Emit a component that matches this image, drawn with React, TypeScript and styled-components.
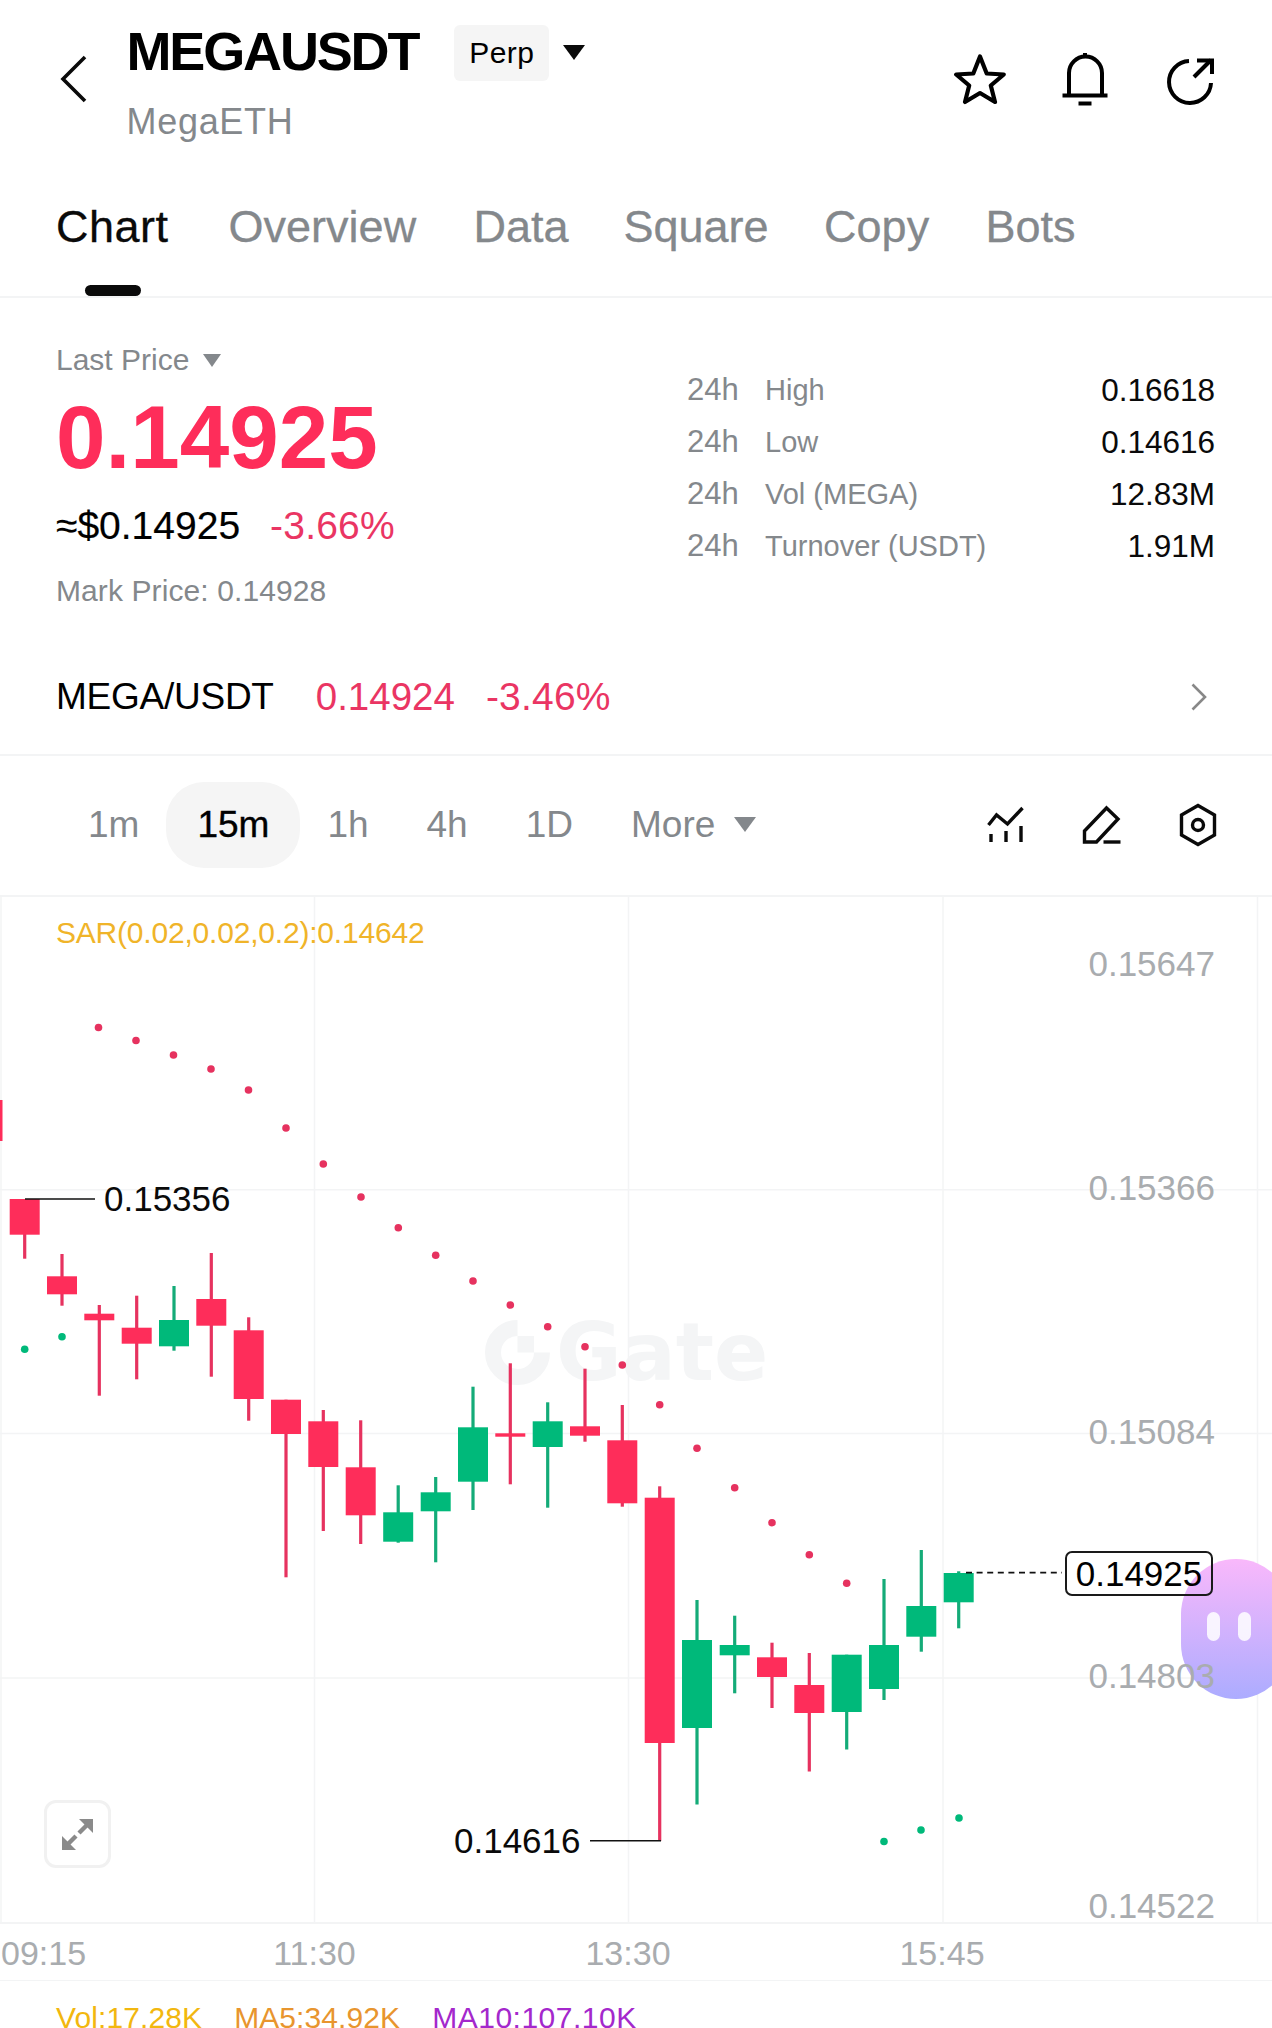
import React from "react";
import styled, { createGlobalStyle } from "styled-components";

const Global = createGlobalStyle`
  html, body { margin: 0; padding: 0; background: #fff; }
  * { box-sizing: border-box; }
  body { font-family: "Liberation Sans", Arial, sans-serif; color: #000; }
`;

const RED = "#fe2d5a";
const RED_WICK = "#e6325f";
const RED_TEXT = "#ea3563";
const GREEN = "#00b97a";
const GREEN_WICK = "#14ab78";
const GRAY = "#84888c";
const LINE = "#f3f4f5";

const Page = styled.div`
  width: 1272px;
  height: 2028px;
  overflow: hidden;
  background: #fff;
`;

/* ---------- header ---------- */
const Header = styled.header`
  display: flex;
  height: 150px;
  padding: 0 56px 0 60px;
`;
const BackIcon = styled.svg`
  width: 28px;
  height: 48px;
  margin: 55px 38.5px 0 0;
  flex: none;
`;
const TitleBlock = styled.div`
  display: flex;
  flex-direction: column;
  padding-top: 25px;
`;
const TitleRow = styled.div`
  display: flex;
  align-items: center;
  height: 56px;
`;
const Title = styled.h1`
  margin: 0 36px 5px 0;
  font-size: 54px;
  line-height: 56px;
  font-weight: 700;
  letter-spacing: -2.15px;
  white-space: nowrap;
`;
const Badge = styled.span`
  display: flex;
  align-items: center;
  justify-content: center;
  width: 95px;
  height: 56px;
  border-radius: 6px;
  background: #f5f5f5;
  font-size: 30px;
  letter-spacing: 0.4px;
  margin-right: 14px;
`;
const Caret = styled.i<{ $w: number; $h: number; $c: string }>`
  display: block;
  flex: none;
  width: 0;
  height: 0;
  border-left: ${(p) => p.$w / 2}px solid transparent;
  border-right: ${(p) => p.$w / 2}px solid transparent;
  border-top: ${(p) => p.$h}px solid ${(p) => p.$c};
`;
const BadgeCaret = styled(Caret)`
  margin-bottom: 2px;
`;
const Subtitle = styled.div`
  margin-top: 19px;
  font-size: 36px;
  line-height: 44px;
  color: ${GRAY};
  letter-spacing: 0.7px;
`;
const HeaderIcons = styled.div`
  margin-left: auto;
  margin-top: 53px;
  display: flex;
  gap: 53px;
  align-items: flex-start;
`;
const HeaderIcon = styled.svg`
  width: 52px;
  height: 53px;
  display: block;
`;

/* ---------- tabs ---------- */
const Tabs = styled.nav`
  display: flex;
  height: 148px;
  padding-left: 56px;
  border-bottom: 2px solid ${LINE};
`;
const Tab = styled.div<{ $w: number; $active?: boolean }>`
  position: relative;
  width: ${(p) => p.$w}px;
  padding-top: 47px;
  font-size: 45px;
  line-height: 60px;
  color: ${(p) => (p.$active ? "#0a0a0a" : GRAY)};
  letter-spacing: ${(p) => (p.$active ? 0.5 : 0)}px;
  -webkit-text-stroke: 0.3px currentColor;
  ${(p) =>
    p.$active &&
    `&::after {
      content: "";
      position: absolute;
      left: 29px;
      bottom: 0;
      width: 56px;
      height: 11px;
      border-radius: 6px;
      background: #0a0a0a;
    }`}
`;

/* ---------- price section ---------- */
const PriceSection = styled.section`
  border-bottom: 2px solid ${LINE};
  padding: 44px 57px 35px 56px;
`;
const PriceTop = styled.div`
  display: flex;
  justify-content: space-between;
`;
const PriceCol = styled.div`
  display: flex;
  flex-direction: column;
`;
const LastLabel = styled.div`
  display: flex;
  align-items: center;
  gap: 14px;
  font-size: 30px;
  line-height: 36px;
  color: ${GRAY};
`;
const BigPrice = styled.div`
  margin-top: 15px;
  font-size: 89px;
  line-height: 88px;
  font-weight: 700;
  color: ${RED};
`;
const UsdRow = styled.div`
  margin-top: 23px;
  display: flex;
  gap: 30px;
  font-size: 39px;
  line-height: 44px;
`;
const UsdText = styled.span`
  -webkit-text-stroke: 0.2px currentColor;
`;
const ChangeText = styled.span`
  color: ${RED_TEXT};
  font-size: 39px;
  letter-spacing: 0.2px;
`;
const MarkText = styled.div`
  margin-top: 25px;
  font-size: 30px;
  line-height: 36px;
  letter-spacing: 0.1px;
  color: ${GRAY};
`;
const StatsCol = styled.div`
  width: 528px;
  margin-top: 22px;
`;
const StatRow = styled.div`
  display: flex;
  font-size: 29px;
  line-height: 52px;
  color: ${GRAY};
`;
const StatPrefix = styled.span`
  width: 78px;
  font-size: 31px;
`;
const StatValue = styled.span`
  margin-left: auto;
  font-size: 31.5px;
  color: #0a0a0a;
`;
const SpotRow = styled.div`
  display: flex;
  align-items: center;
  margin-top: 66px;
  height: 44px;
  font-size: 38.5px;
  line-height: 44px;
`;
const SpotName = styled.span`
  font-size: 37px;
  letter-spacing: -0.25px;
  margin-right: 42px;
`;
const SpotPrice = styled.span`
  color: ${RED_TEXT};
  margin-right: 31px;
`;
const SpotChevron = styled.svg`
  width: 16px;
  height: 28px;
  margin-left: auto;
  margin-right: 8px;
`;

/* ---------- interval bar ---------- */
const IntervalBar = styled.div`
  display: flex;
  align-items: center;
  height: 141px;
  padding: 0 55.5px 2px 59px;
  border-bottom: 2px solid ${LINE};
`;
const Interval = styled.div<{ $active?: boolean }>`
  display: flex;
  align-items: center;
  justify-content: center;
  height: 86px;
  font-size: 37px;
  padding: 0 ${(p) => (p.$active ? 31 : 29)}px;
  margin: 0 ${(p) => (p.$active ? -2 : 0)}px;
  border-radius: 38px;
  color: ${(p) => (p.$active ? "#000" : GRAY)};
  background: ${(p) => (p.$active ? "#f5f5f5" : "transparent")};
  ${(p) => p.$active && "-webkit-text-stroke: 0.4px #000;"}
`;
const MoreCaret = styled(Caret)`
  margin-left: 19px;
`;
const ToolIcons = styled.div`
  margin-left: auto;
  display: flex;
  gap: 60px;
  align-items: center;
`;
const ToolIcon = styled.svg`
  width: 38px;
  height: 42px;
  display: block;
  overflow: visible;
`;

/* ---------- chart ---------- */
const Chart = styled.div`
  position: relative;
  height: 1025px;
`;
const ChartSvg = styled.svg`
  position: absolute;
  inset: 0;
  width: 1272px;
  height: 1025px;
`;
const Watermark = styled.div`
  position: absolute;
  left: 485px;
  top: 423px;
  display: flex;
  align-items: center;
  gap: 6px;
  height: 65px;
  font-family: "DejaVu Sans", "Liberation Sans", sans-serif;
  font-weight: 700;
  font-size: 80px;
  color: #f4f5f6;
`;
const WatermarkLogo = styled.svg`
  width: 65px;
  height: 65px;
  flex: none;
`;
const Legend = styled.div`
  position: absolute;
  left: 56px;
  top: 18px;
  font-size: 30px;
  line-height: 36px;
  letter-spacing: -0.2px;
  color: #f0b429;
`;
const PriceTick = styled.div<{ $base: number }>`
  position: absolute;
  right: 57px;
  top: ${(p) => p.$base - 897 - 32}px;
  font-size: 35px;
  line-height: 40px;
  color: #a9acaf;
`;
const ExtremeLabel = styled.div<{ $x: number; $base: number }>`
  position: absolute;
  left: ${(p) => p.$x}px;
  top: ${(p) => p.$base - 897 - 32}px;
  font-size: 35px;
  line-height: 40px;
  color: #0a0a0a;
`;
const LastTag = styled.div`
  position: absolute;
  left: 1065px;
  top: 654px;
  width: 148px;
  height: 45px;
  display: flex;
  align-items: center;
  justify-content: center;
  border: 2px solid #1a1a1a;
  border-radius: 7px;
  font-size: 35px;
  line-height: 40px;
`;
const Mascot = styled.div`
  position: absolute;
  left: 1181px;
  top: 662px;
  width: 110px;
  height: 140px;
  border-radius: 70px;
  background: linear-gradient(180deg, #f9b8fb 0%, #acacff 100%);
  display: flex;
  gap: 18px;
  padding: 53px 0 0 26px;
`;
const MascotEye = styled.span`
  display: block;
  width: 13px;
  height: 29px;
  border-radius: 7px;
  background: rgba(255, 255, 255, 0.85);
`;
const ExpandButton = styled.div`
  position: absolute;
  left: 44px;
  top: 903px;
  width: 67px;
  height: 68px;
  display: flex;
  align-items: center;
  justify-content: center;
  border: 3px solid #f1f1f1;
  border-radius: 12px;
  background: #fff;
`;
const ExpandIcon = styled.svg`
  width: 31px;
  height: 31px;
`;

/* ---------- time axis + legend ---------- */
const TimeAxis = styled.div`
  position: relative;
  height: 59px;
  border-top: 2px solid ${LINE};
  border-bottom: 1px solid ${LINE};
`;
const TimeLabel = styled.span<{ $x: number; $start?: boolean }>`
  position: absolute;
  left: ${(p) => p.$x}px;
  top: 9px;
  transform: ${(p) => (p.$start ? "none" : "translateX(-50%)")};
  font-size: 34px;
  line-height: 40px;
  color: #a9acaf;
`;
const VolumeLegend = styled.div`
  display: flex;
  gap: 32px;
  padding: 19px 0 0 56px;
  font-size: 30px;
  line-height: 36px;
  letter-spacing: 0.1px;
`;
const VolumeItem = styled.span<{ $c: string; $wide?: boolean }>`
  color: ${(p) => p.$c};
  ${(p) => p.$wide && "letter-spacing: 0.5px;"}
`;

/* ---------- data ---------- */
type Candle = [number, number, number, number, number, boolean];
// x, wickTop, wickBottom, bodyTop, bodyBottom, isUp
const candles: Candle[] = [
  [24.7, 1199, 1258.7, 1199, 1234.7, false],
  [62, 1254, 1305.7, 1276.3, 1294.3, false],
  [99.3, 1305, 1395.7, 1313.7, 1320.3, false],
  [136.7, 1295.7, 1379.3, 1327.7, 1343.7, false],
  [174, 1286, 1350.7, 1320, 1346.3, true],
  [211.3, 1253, 1376.7, 1299, 1325.7, false],
  [248.7, 1317.3, 1420.7, 1330.3, 1399, false],
  [286, 1399.7, 1577.3, 1399.7, 1434, false],
  [323.3, 1410, 1531, 1421.3, 1467, false],
  [360.7, 1420.3, 1544, 1467.3, 1515.3, false],
  [398.2, 1485.3, 1542.7, 1512.3, 1541.7, true],
  [435.7, 1477, 1562.3, 1492.3, 1511.3, true],
  [473, 1386.7, 1510, 1427.3, 1481.7, true],
  [510.3, 1363.3, 1484.3, 1433.3, 1436.7, false],
  [547.7, 1402.3, 1507.7, 1421.3, 1447, true],
  [585, 1368.7, 1441.7, 1426.3, 1435.7, false],
  [622.3, 1405, 1506.7, 1440.3, 1503.3, false],
  [659.7, 1486.3, 1841, 1497.7, 1743, false],
  [697, 1600, 1804.5, 1640, 1728, true],
  [734.7, 1615.7, 1693.3, 1645, 1655.3, true],
  [772, 1642.7, 1708, 1657.3, 1677, false],
  [809.3, 1653, 1771.5, 1685, 1713, false],
  [846.7, 1654.7, 1749.5, 1654.7, 1712, true],
  [884, 1579, 1700, 1645, 1689, true],
  [921.3, 1550, 1651.7, 1606, 1636.7, true],
  [958.7, 1571.3, 1628.3, 1573, 1602.3, true],
];
const redDots: [number, number][] = [
  [98.5, 1027.5], [136, 1040.5], [173.5, 1055], [211, 1069], [248.5, 1090],
  [286, 1128], [323.3, 1164], [361, 1197], [398.3, 1227.7], [435.7, 1255.3],
  [473, 1281], [510.3, 1305], [547.7, 1326.7], [585, 1346.7], [622.3, 1365],
  [659.7, 1404.7], [697, 1448.3], [734.7, 1487.7], [772, 1522.7], [809.3, 1554.7],
  [846.7, 1583.3],
];
const greenDots: [number, number][] = [
  [24.7, 1349.3], [62, 1336.7], [884, 1841.5], [921, 1830], [959, 1818],
];
const stats = [
  ["High", "0.16618"],
  ["Low", "0.14616"],
  ["Vol (MEGA)", "12.83M"],
  ["Turnover (USDT)", "1.91M"],
];
const tabs: [string, number][] = [
  ["Chart", 172.6],
  ["Overview", 244.9],
  ["Data", 150],
  ["Square", 200.6],
  ["Copy", 161.3],
  ["Bots", 100],
];
const intervals = ["1m", "15m", "1h", "4h", "1D"];
const ticks: [string, number][] = [
  ["0.15647", 976],
  ["0.15366", 1200],
  ["0.15084", 1444],
  ["0.14803", 1688],
  ["0.14522", 1918],
];

export default function App() {
  return (
    <Page>
      <Global />
      <Header>
        <BackIcon viewBox="0 0 28 48" fill="none" stroke="#0a0a0a" strokeWidth="3.6">
          <path d="M25 2 L3 24 L25 46" />
        </BackIcon>
        <TitleBlock>
          <TitleRow>
            <Title>MEGAUSDT</Title>
            <Badge>Perp</Badge>
            <BadgeCaret $w={22} $h={15} $c="#0a0a0a" />
          </TitleRow>
          <Subtitle>MegaETH</Subtitle>
        </TitleBlock>
        <HeaderIcons>
          <HeaderIcon viewBox="0 0 52 53" fill="none" stroke="#000" strokeWidth="4.2" strokeLinejoin="round">
            <path d="M26 3.5 L32.7 20.5 L49.8 21.5 L36.8 32.5 L41 49 L26 40 L11 49 L15.2 32.5 L2.2 21.5 L19.3 20.5 Z" />
          </HeaderIcon>
          <HeaderIcon viewBox="0 0 52 53" fill="none" stroke="#000" strokeWidth="4">
            <path d="M10 42 V20 A16.5 16.5 0 0 1 43 20 V42" />
            <path d="M3.5 42.5 H48.5" />
            <path d="M26 0 V5" />
            <path d="M19.5 50.5 H32.5" />
          </HeaderIcon>
          <HeaderIcon viewBox="0 0 52 53" fill="none" stroke="#000" strokeWidth="4">
            <path d="M25 8 A21 21 0 1 0 47 30" />
            <path d="M30 24 L47 7" />
            <path d="M33 7.5 H48 V21" />
          </HeaderIcon>
        </HeaderIcons>
      </Header>

      <Tabs>
        {tabs.map(([t, w], i) => (
          <Tab key={t} $w={w} $active={i === 0}>
            {t}
          </Tab>
        ))}
      </Tabs>

      <PriceSection>
        <PriceTop>
          <PriceCol>
            <LastLabel>
              Last Price
              <Caret $w={19} $h={13} $c={GRAY} />
            </LastLabel>
            <BigPrice>0.14925</BigPrice>
            <UsdRow>
              <UsdText>≈$0.14925</UsdText>
              <ChangeText>-3.66%</ChangeText>
            </UsdRow>
            <MarkText>Mark Price: 0.14928</MarkText>
          </PriceCol>
          <StatsCol>
            {stats.map(([label, value]) => (
              <StatRow key={label}>
                <StatPrefix>24h</StatPrefix>
                <span>{label}</span>
                <StatValue>{value}</StatValue>
              </StatRow>
            ))}
          </StatsCol>
        </PriceTop>
        <SpotRow>
          <SpotName>MEGA/USDT</SpotName>
          <SpotPrice>0.14924</SpotPrice>
          <ChangeText>-3.46%</ChangeText>
          <SpotChevron viewBox="0 0 16 28" fill="none" stroke="#888" strokeWidth="2.6">
            <path d="M1.5 1.5 L14 14 L1.5 26.5" />
          </SpotChevron>
        </SpotRow>
      </PriceSection>

      <IntervalBar>
        {intervals.map((t) => (
          <Interval key={t} $active={t === "15m"}>
            {t}
          </Interval>
        ))}
        <Interval>
          More
          <MoreCaret $w={22} $h={15} $c={GRAY} />
        </Interval>
        <ToolIcons>
          <ToolIcon viewBox="-3.5 0 38 42" fill="none" stroke="#0a0a0a" strokeWidth="3.4">
            <path d="M2 21 L10 11 L21 20 L36 4" />
            <path d="M4.5 30 V38 M19.5 27 V38 M34.5 22 V38" />
          </ToolIcon>
          <ToolIcon viewBox="-1.5 0 38 42" fill="none" stroke="#0a0a0a" strokeWidth="3.4">
            <path d="M2 38 V27 L24 4 L35.5 15 L14 38 Z" />
            <path d="M21 38 H38" />
          </ToolIcon>
          <ToolIcon viewBox="0 0 38 42" fill="none" stroke="#0a0a0a" strokeWidth="3.4">
            <path d="M19 1.5 L35.5 11 V31 L19 40.5 L2.5 31 V11 Z" />
            <circle cx="19" cy="21" r="5.5" />
          </ToolIcon>
        </ToolIcons>
      </IntervalBar>

      <Chart>
        <Watermark>
          <WatermarkLogo viewBox="0 0 65 65" fill="none" stroke="#f4f5f6" strokeWidth="16">
            <path d="M32.5 8 A24.5 24.5 0 1 0 57 32.5" />
            <rect x="32.5" y="16" width="16.5" height="16.5" fill="#f4f5f6" stroke="none" />
          </WatermarkLogo>
          Gate
        </Watermark>
        <ChartSvg viewBox="0 897 1272 1025">
          {[1189.7, 1433.5, 1678].map((y) => (
            <line key={y} x1="0" x2="1272" y1={y} y2={y} stroke={LINE} strokeWidth="1.5" />
          ))}
          {[1, 314.5, 628.5, 943, 1257.5].map((x) => (
            <line key={x} x1={x} x2={x} y1="897" y2="1922" stroke={LINE} strokeWidth="1.5" />
          ))}
          <rect x="0" y="1100" width="2.5" height="41" fill={RED} />
          {candles.map(([x, wt, wb, bt, bb, up]) => (
            <g key={x}>
              <rect x={x - 1.6} y={wt} width="3.2" height={wb - wt} fill={up ? GREEN_WICK : RED_WICK} />
              <rect x={x - 15} y={bt} width="30" height={bb - bt} fill={up ? GREEN : RED} />
            </g>
          ))}
          {redDots.map(([x, y]) => (
            <circle key={x} cx={x} cy={y} r="3.8" fill={RED_WICK} />
          ))}
          {greenDots.map(([x, y]) => (
            <circle key={x} cx={x} cy={y} r="3.8" fill={GREEN} />
          ))}
          <line x1="25" x2="95" y1="1199" y2="1199" stroke="#111" strokeWidth="1.6" />
          <line x1="590" x2="661" y1="1840.7" y2="1840.7" stroke="#111" strokeWidth="1.6" />
          <line x1="966" x2="1062" y1="1572.7" y2="1572.7" stroke="#111" strokeWidth="1.8" strokeDasharray="6 4.6" />
        </ChartSvg>
        <Mascot>
          <MascotEye />
          <MascotEye />
        </Mascot>
        <Legend>SAR(0.02,0.02,0.2):0.14642</Legend>
        {ticks.map(([t, b]) => (
          <PriceTick key={t} $base={b}>
            {t}
          </PriceTick>
        ))}
        <ExtremeLabel $x={104} $base={1211}>0.15356</ExtremeLabel>
        <ExtremeLabel $x={454} $base={1853}>0.14616</ExtremeLabel>
        <LastTag>0.14925</LastTag>
        <ExpandButton>
          <ExpandIcon viewBox="0 0 31 31" fill="#8a8a8a">
            <path d="M17 0 H31 V14 Z" />
            <path d="M0 17 V31 H14 Z" />
            <path d="M25 6 L17 14 M6 25 L14 17" stroke="#8a8a8a" strokeWidth="4.4" fill="none" />
          </ExpandIcon>
        </ExpandButton>
      </Chart>

      <TimeAxis>
        <TimeLabel $x={1} $start>09:15</TimeLabel>
        <TimeLabel $x={314.5}>11:30</TimeLabel>
        <TimeLabel $x={628}>13:30</TimeLabel>
        <TimeLabel $x={942}>15:45</TimeLabel>
      </TimeAxis>
      <VolumeLegend>
        <VolumeItem $c="#f2b70f">Vol:17.28K</VolumeItem>
        <VolumeItem $c="#e8952e">MA5:34.92K</VolumeItem>
        <VolumeItem $c="#a428cc" $wide>MA10:107.10K</VolumeItem>
      </VolumeLegend>
    </Page>
  );
}
